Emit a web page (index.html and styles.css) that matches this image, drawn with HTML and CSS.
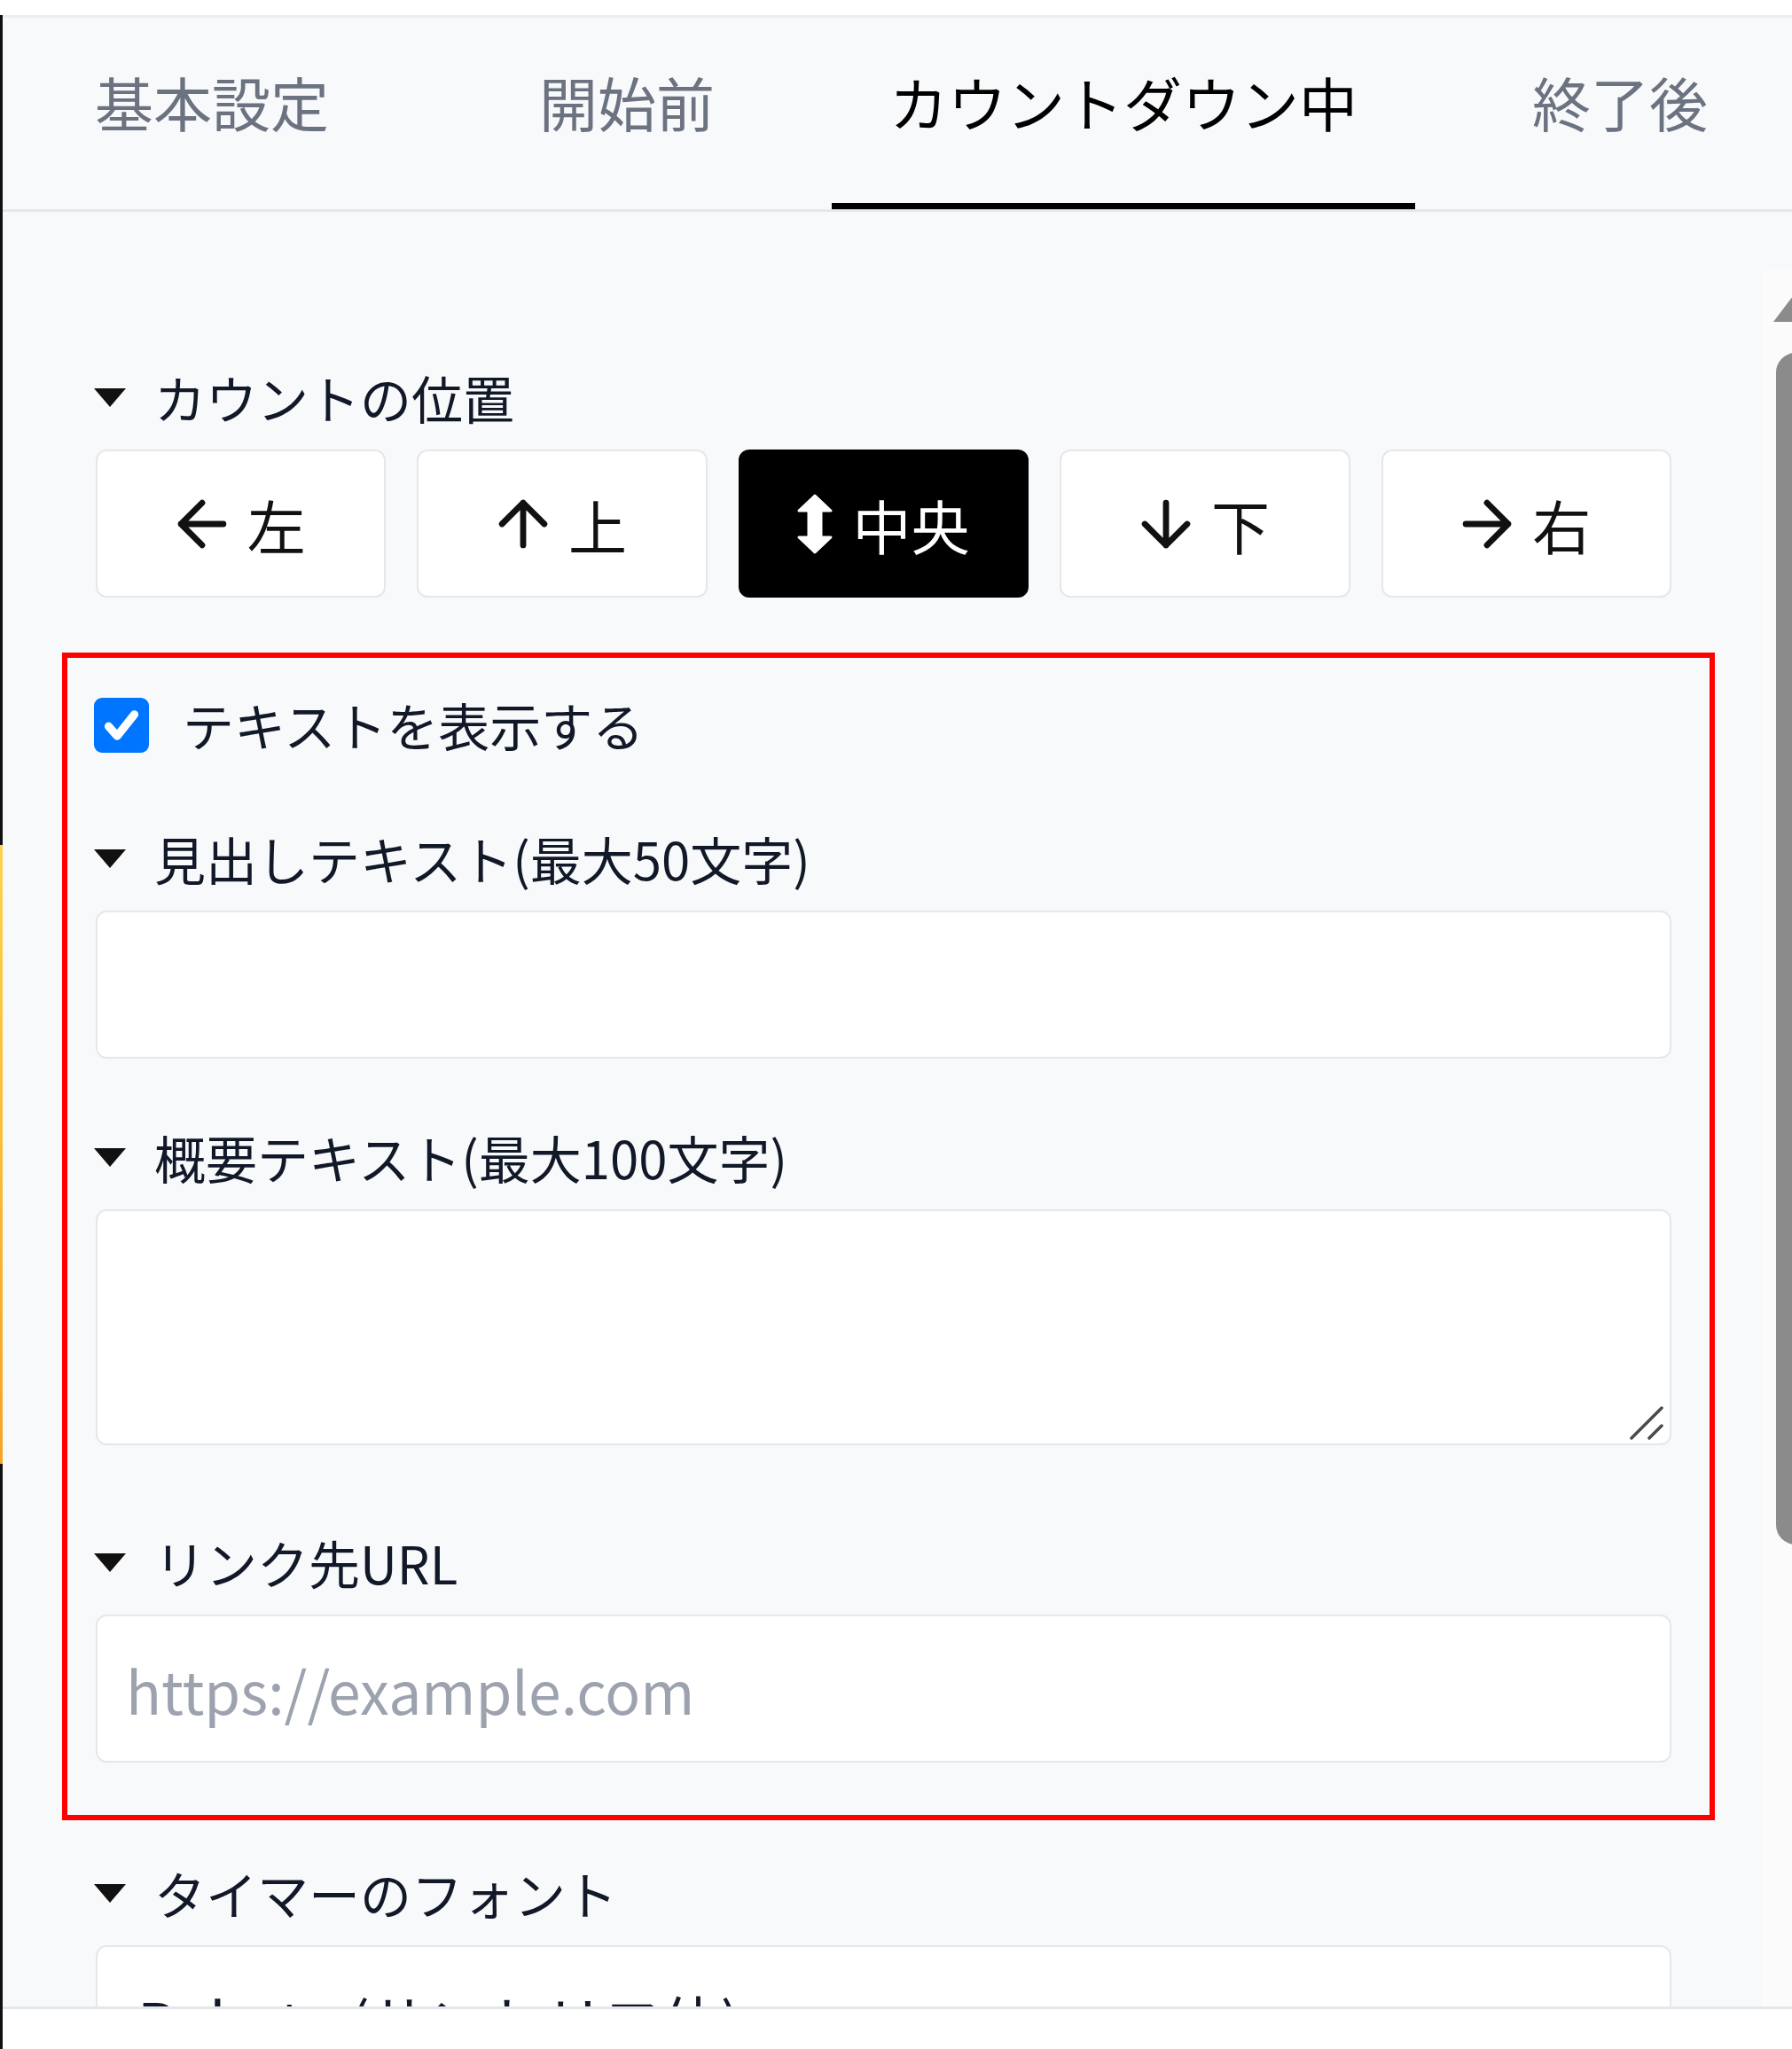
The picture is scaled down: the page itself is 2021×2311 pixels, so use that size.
FILE: index.html
```html
<!DOCTYPE html>
<html lang="ja">
  <head>
    <meta charset="UTF-8" />
    <meta name="viewport" content="width=device-width, initial-scale=1.0" />
    <title>カウントダウン設定</title>
    <link rel="stylesheet" href="styles.css">
  </head>
  <body>
    <div class="window">
      <div class="edge"></div>
      <div class="panel">
        <nav class="tabs">
          <button class="tab">基本設定</button>
          <button class="tab">開始前</button>
          <button class="tab active">カウントダウン中</button>
          <button class="tab">終了後</button>
        </nav>

        <div class="scroll-area">
          <div class="settings">
            <div class="field">
              <div class="field-label"><span class="caret"></span>カウントの位置</div>
              <div class="positions">
                <button class="pos-button">
                  <svg class="arrow" viewBox="3.5 3.5 17 17"><path d="M19 12H5M12 19l-7-7 7-7" /></svg>
                  左
                </button>
                <button class="pos-button">
                  <svg class="arrow" viewBox="3.5 3.5 17 17"><path d="M12 19V5M5 12l7-7 7 7" /></svg>
                  上
                </button>
                <button class="pos-button active">
                  <svg class="arrow-both" viewBox="0 0 40 68"><path d="M20 2L38 19H27V49H38L20 66L2 49H13V19H2Z" /></svg>
                  中央
                </button>
                <button class="pos-button">
                  <svg class="arrow" viewBox="3.5 3.5 17 17"><path d="M12 5v14M19 12l-7 7-7-7" /></svg>
                  下
                </button>
                <button class="pos-button">
                  <svg class="arrow" viewBox="3.5 3.5 17 17"><path d="M5 12h14M12 5l7 7-7 7" /></svg>
                  右
                </button>
              </div>
            </div>

            <div class="highlight">
              <label class="check-row">
                <span class="checkbox">
                  <svg viewBox="0 0 24 24"><path d="M6 12.5l4 4.5 8-10" /></svg>
                </span>
                テキストを表示する
              </label>

              <div class="field heading-field">
                <div class="field-label"><span class="caret"></span>見出しテキスト(最大50文字)</div>
                <input type="text" class="text-input" />
              </div>

              <div class="field summary-field">
                <div class="field-label"><span class="caret"></span>概要テキスト(最大100文字)</div>
                <div class="textarea-wrap">
                  <textarea class="text-input textarea"></textarea>
                  <svg class="grip" viewBox="0 0 38 38"><path d="M2 36L36 2M22 36L36 22" /></svg>
                </div>
              </div>

              <div class="field url-field">
                <div class="field-label"><span class="caret"></span>リンク先URL</div>
                <input type="text" class="text-input" placeholder="https://example.com" />
              </div>
            </div>

            <div class="field font-field">
              <div class="field-label"><span class="caret"></span>タイマーのフォント</div>
              <select class="text-input select">
                <option>Roboto (サンセリフ体)</option>
              </select>
            </div>
          </div>

          <div class="scrollbar">
            <div class="scroll-arrow"></div>
            <div class="scroll-thumb"></div>
          </div>
        </div>

        <div class="footer"></div>
      </div>
    </div>
  </body>
</html>
```

FILE: styles.css
```css
html,
body {
  margin: 0;
  height: 100%;
  overflow: hidden;
  background-color: #fff;
}

body {
  font-family: "Noto Sans CJK JP", "Noto Sans", sans-serif;
  color: #111827;
}

.window {
  display: flex;
  margin-top: 17px;
  height: 2294px;
}

.edge {
  width: 3px;
  flex-shrink: 0;
  background: linear-gradient(
    to bottom,
    #111 0,
    #111 936px,
    #fcd34d 936px,
    #f5a524 1634px,
    #111 1634px
  );
}

.panel {
  width: 2057px;
  flex-shrink: 0;
  display: flex;
  flex-direction: column;
  background-color: #f8f9fb;
  border-top: 3px solid #eceef1;
}

/* tabs */

.tabs {
  display: flex;
  gap: 67px;
  padding-left: 39px;
  border-bottom: 3px solid #e5e7eb;
}

.tab {
  padding: 45px 65px 65px;
  border: none;
  border-bottom: 7px solid transparent;
  background: none;
  font-family: inherit;
  font-size: 66px;
  line-height: 99px;
  color: #6b7280;
  white-space: nowrap;
  cursor: pointer;
}

.tab:first-child {
  margin-right: 40px;
}

.tab.active {
  color: #000;
  border-bottom-color: #000;
}

/* content */

.scroll-area {
  display: flex;
  height: 2024px;
  overflow: hidden;
}

.settings {
  width: 1984px;
  flex-shrink: 0;
  box-sizing: border-box;
  padding: 166px 102px 0 105px;
}

.field-label {
  display: flex;
  align-items: center;
  gap: 32px;
  font-size: 58px;
  line-height: 87px;
  margin-bottom: 15px;
  white-space: nowrap;
}

.caret {
  width: 0;
  height: 0;
  margin-left: -2px;
  border-left: 18px solid transparent;
  border-right: 18px solid transparent;
  border-top: 21px solid #111;
}

.positions {
  display: grid;
  grid-template-columns: repeat(5, 1fr);
  gap: 35px;
}

.pos-button {
  height: 167px;
  display: flex;
  align-items: center;
  justify-content: center;
  gap: 22px;
  border: 2px solid #e5e7eb;
  border-radius: 12px;
  background-color: #fff;
  font-family: inherit;
  font-size: 66px;
  color: #111;
  cursor: pointer;
}

.pos-button.active {
  background-color: #000;
  border-color: #000;
  color: #fff;
}

.arrow {
  width: 58px;
  height: 58px;
  fill: none;
  stroke: currentColor;
  stroke-width: 2;
  stroke-linecap: round;
  stroke-linejoin: round;
}

.arrow-both {
  width: 40px;
  height: 68px;
  fill: currentColor;
  stroke: currentColor;
  stroke-width: 3;
  stroke-linejoin: round;
}

/* highlighted group */

.highlight {
  margin: 62px -49px 0 -38px;
  padding: 32px 43px 59px 32px;
  border: 6px solid #ff0000;
}

.check-row {
  display: flex;
  align-items: center;
  gap: 38px;
  font-size: 58px;
  line-height: 87px;
}

.checkbox {
  width: 62px;
  height: 62px;
  margin-left: -2px;
  border-radius: 9px;
  background-color: #0075ff;
  display: flex;
  align-items: center;
  justify-content: center;
}

.checkbox svg {
  width: 58px;
  height: 58px;
  fill: none;
  stroke: #fff;
  stroke-width: 3.8;
  stroke-linecap: round;
  stroke-linejoin: round;
}

.heading-field {
  margin-top: 64px;
}

.summary-field {
  margin-top: 68px;
}

.url-field {
  margin-top: 89px;
}

.font-field {
  margin-top: 39px;
}

.text-input {
  display: block;
  width: 100%;
  height: 167px;
  box-sizing: border-box;
  padding: 0 32px;
  border: 2px solid #e5e7eb;
  border-radius: 12px;
  background-color: #fff;
  font-family: inherit;
  font-size: 66px;
  color: #111827;
  outline: none;
}

.text-input::placeholder {
  color: #9ca3af;
}

.textarea-wrap {
  position: relative;
}

.textarea {
  height: 266px;
  resize: none;
}

.grip {
  position: absolute;
  right: 9px;
  bottom: 6px;
  width: 38px;
  height: 38px;
  fill: none;
  stroke: #4a4a4a;
  stroke-width: 3.5;
  stroke-linecap: round;
}

.select {
  appearance: none;
  padding-left: 45px;
}

/* fake scrollbar */

.scrollbar {
  width: 73px;
  flex-shrink: 0;
  margin-top: 66px;
  padding-top: 25px;
  background-color: #fbfbfc;
}

.scroll-arrow {
  width: 0;
  height: 0;
  margin-left: 13px;
  border-left: 25px solid transparent;
  border-right: 25px solid transparent;
  border-bottom: 33px solid #8b8b8b;
}

.scroll-thumb {
  width: 44px;
  height: 1344px;
  margin: 35px 0 0 16px;
  border-radius: 22px;
  background-color: #8b8b8b;
}

.footer {
  height: 45px;
  border-top: 3px solid #e5e7eb;
  background-color: #fff;
}
```
